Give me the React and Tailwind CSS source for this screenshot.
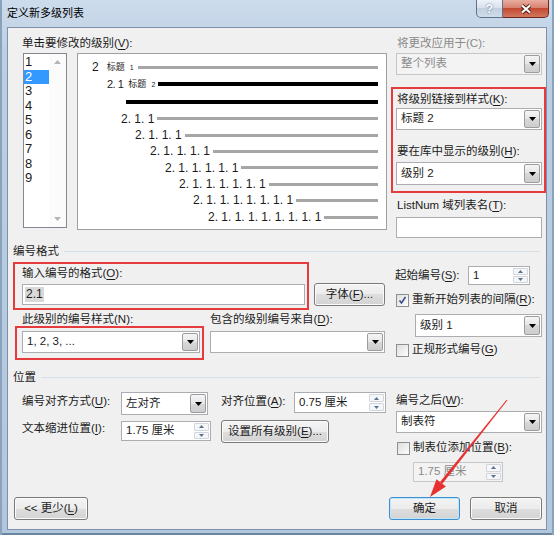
import React from 'react'

// Win7 style dialog: "定义新多级列表"

const U = ({ children }) => (
  <span className="underline decoration-1 underline-offset-[2px]">{children}</span>
)

function Caret() {
  return (
    <svg width="7" height="4" viewBox="0 0 7 4">
      <path d="M0 0h7L3.5 4z" fill="#000" />
    </svg>
  )
}

function Combo({ value, className = '', disabled = false }) {
  return (
    <div
      className={`flex border ${
        disabled
          ? 'border-[#c4c7cc] bg-[#f3f3f3] text-[#8a8a8a]'
          : 'border-[#abadb3] bg-white'
      } ${className}`}
    >
      <span className="flex flex-1 items-center pl-[4px] leading-none">{value}</span>
      <span className="my-[1px] mr-[1px] flex w-[16px] items-center justify-center rounded-[2px] border border-[#9c9c9c] bg-[linear-gradient(#f5f5f5,#e6e6e6_50%,#d8d8d8_50%,#cdcdcd)]">
        <Caret />
      </span>
    </div>
  )
}

function SpinArrow({ up }) {
  return (
    <svg width="5" height="3" viewBox="0 0 5 3">
      <path d={up ? 'M0 3h5L2.5 0z' : 'M0 0h5L2.5 3z'} fill="#59708f" />
    </svg>
  )
}

function Spinner({ value, className = '', disabled = false }) {
  return (
    <div
      className={`flex border ${
        disabled
          ? 'border-[#c4c7cc] bg-[#f3f3f3] text-[#8a8a8a]'
          : 'border-[#abadb3] bg-white'
      } ${className}`}
    >
      <span className="flex flex-1 items-center pl-[4px] leading-none">{value}</span>
      <span className="my-[1px] mr-[1px] flex w-[15px] flex-col gap-[1px]">
        <span className="flex flex-1 items-center justify-center rounded-[1px] border border-[#d2d6dc] bg-[#f4f6f8]">
          <SpinArrow up />
        </span>
        <span className="flex flex-1 items-center justify-center rounded-[1px] border border-[#d2d6dc] bg-[#f4f6f8]">
          <SpinArrow />
        </span>
      </span>
    </div>
  )
}

function Btn({ children, className = '', primary = false }) {
  return (
    <button
      className={`flex items-center justify-center rounded-[3px] border bg-[linear-gradient(#f4f4f4,#ececec_50%,#dedede_50%,#d3d3d3)] leading-none ${
        primary
          ? 'border-[#3d8fd1] shadow-[inset_0_0_0_1px_#bfe7fb]'
          : 'border-[#7a7a7a] shadow-[inset_0_0_0_1px_#fbfbfb]'
      } ${className}`}
    >
      {children}
    </button>
  )
}

function Check({ checked = false }) {
  return (
    <span className="flex h-[13px] w-[13px] shrink-0 items-center justify-center border border-[#8e8f8f] bg-[linear-gradient(135deg,#dedede,#fdfdfd)]">
      {checked ? (
        <svg width="9" height="9" viewBox="0 0 9 9">
          <path d="M1.5 4.5l2 2.5 4-6" fill="none" stroke="#3b4f8f" strokeWidth="1.6" />
        </svg>
      ) : null}
    </span>
  )
}

function GroupHeader({ title }) {
  return (
    <div className="flex h-[14px] shrink-0 items-center pl-[5px]">
      <span className="leading-[14px]">{title}</span>
      <span className="ml-[5px] mr-[6px] h-px flex-1 bg-[#d5dfe5]" />
    </div>
  )
}

// preview rows of the list levels
const levels = [
  { row: 'h-[16.5px] pl-[43px]', text: '2. 1. 1' },
  { row: 'h-[16px] pl-[57px]', text: '2. 1. 1. 1' },
  { row: 'h-[16.5px] pl-[72px]', text: '2. 1. 1. 1. 1' },
  { row: 'h-[16.5px] pl-[87px]', text: '2. 1. 1. 1. 1. 1' },
  { row: 'h-[16px] pl-[101px]', text: '2. 1. 1. 1. 1. 1. 1' },
  { row: 'h-[16.5px] pl-[115px]', text: '2. 1. 1. 1. 1. 1. 1. 1' },
  { row: 'h-[17px] pl-[130px]', text: '2. 1. 1. 1. 1. 1. 1. 1. 1' },
]

function Preview() {
  return (
    <div className="flex h-[177px] w-[310px] flex-col border border-[#a0a0a0] bg-white pr-[8px] pt-[4.5px]">
      <div className="flex h-[17px] items-center pl-[14px]">
        <span className="text-[12px]">2</span>
        <span className="ml-[8px] text-[9px] leading-none">标题</span>
        <span className="ml-[5px] text-[7px] leading-none">1</span>
        <span className="ml-[4px] h-[3px] flex-1 bg-[#a6a6a6]" />
      </div>
      <div className="flex h-[17.5px] items-center pl-[29px]">
        <span className="text-[11px] tracking-[-0.5px]">2. 1</span>
        <span className="ml-[5px] text-[9px] leading-none">标题</span>
        <span className="ml-[5px] text-[7px] leading-none">2</span>
        <span className="ml-[3px] h-[4px] flex-1 bg-black" />
      </div>
      <div className="flex h-[17.5px] items-center pl-[48px]">
        <span className="h-[4px] flex-1 bg-black" />
      </div>
      {levels.map((lv) => (
        <div key={lv.text} className={`flex items-center ${lv.row}`}>
          <span className="text-[12px] leading-none">{lv.text}</span>
          <span className="ml-[3px] h-[3px] flex-1 bg-[#a6a6a6]" />
        </div>
      ))}
    </div>
  )
}

function LevelList() {
  return (
    <div className="flex h-[175px] w-[44px] border border-[#828790] bg-white">
      <div className="flex flex-1 flex-col pt-[1px] text-[13px] leading-[14.5px]">
        {[1, 2, 3, 4, 5, 6, 7, 8, 9].map((n) => (
          <span
            key={n}
            className={`pl-[1px] ${n === 2 ? 'bg-[#3399ff] text-white' : ''}`}
          >
            {n}
          </span>
        ))}
      </div>
      <div className="flex w-[17px] flex-col items-center justify-between bg-[#fbfbfb] py-[6px]">
        <svg width="7" height="4" viewBox="0 0 7 4">
          <path d="M0 4h7L3.5 0z" fill="#b5b5b5" />
        </svg>
        <svg width="7" height="4" viewBox="0 0 7 4">
          <path d="M0 0h7L3.5 4z" fill="#b5b5b5" />
        </svg>
      </div>
    </div>
  )
}

export default function App() {
  return (
    <div className="relative flex h-[535px] w-[554px] flex-col overflow-hidden bg-[linear-gradient(180deg,#cddcec,#bccfe3_10%,#b2c7dd)] font-['Liberation_Sans','Noto_Sans_CJK_SC',sans-serif] text-[11.5px] text-[#1b1b1b] shadow-[inset_2px_0_0_#8aa3bd,inset_-2px_0_0_#8aa3bd,inset_0_-2px_0_#6d86a0]">
      {/* title bar */}
      <div className="flex h-[27px] shrink-0 justify-between">
        <span className="pl-[7px] pt-[5px] text-[11px] leading-[16px] text-black">定义新多级列表</span>
        <div className="mr-[5px] flex h-[18px]">
          <span className="flex w-[27px] items-center justify-center rounded-bl-[5px] border border-t-0 border-[#5f7390] bg-[linear-gradient(#eef3f9,#d8e2ee_45%,#c2d0e0_50%,#cfdcea)] text-[12px] font-bold text-white [text-shadow:0_0_2px_#4b5d78]">
            ?
          </span>
          <span className="flex w-[46px] items-center justify-center rounded-br-[5px] border border-l-0 border-t-0 border-[#6e2a20] bg-[linear-gradient(#e9ad9f,#d88370_45%,#c34a33_50%,#d3775f)]">
            <svg width="12" height="10" viewBox="0 0 12 10">
              <path d="M2 1.5l8 7M10 1.5l-8 7" stroke="#4a1a12" strokeWidth="4" />
              <path d="M2 1.5l8 7M10 1.5l-8 7" stroke="#fff" strokeWidth="2.2" />
            </svg>
          </span>
        </div>
      </div>

      {/* client area */}
      <div className="mx-[7px] flex h-[503px] flex-col border border-[#7d92aa] bg-[#f0f0f0]">
        {/* levels + preview + link options */}
        <div className="flex h-[216px] shrink-0">
          <div className="flex flex-col pl-[14px] pt-[8px]">
            <span className="leading-[14px]">
              单击要修改的级别(<U>V</U>):
            </span>
            <div className="mt-[3px] flex">
              <div className="ml-[1px]">
                <LevelList />
              </div>
              <div className="ml-[10px]">
                <Preview />
              </div>
            </div>
          </div>
          <div className="ml-[4px] flex w-[155px] flex-col pt-[8px]">
            <span className="pl-[6px] leading-[14px] text-[#8a8a8a]">将更改应用于(C):</span>
            <Combo value="整个列表" disabled className="ml-[5px] mt-[3px] h-[22px] w-[146px]" />
            <div className="mt-[12px] flex h-[106px] flex-col border-2 border-[#e63a3d] pl-[3px] pt-[3px]">
              <span className="pl-[1px] leading-[14px]">
                将级别链接到样式(<U>K</U>):
              </span>
              <Combo value="标题 2" className="mt-[2px] h-[22px] w-[146px]" />
              <span className="mt-[14px] pl-[1px] leading-[14px]">
                要在库中显示的级别(<U>H</U>):
              </span>
              <Combo value="级别 2" className="mt-[4px] h-[23px] w-[146px]" />
            </div>
            <span className="ml-[6px] mt-[5px] leading-[14px]">
              ListNum 域列表名(<U>T</U>):
            </span>
            <div className="ml-[5px] mt-[5px] h-[21px] w-[146px] border border-[#abadb3] bg-white" />
          </div>
        </div>

        <GroupHeader title="编号格式" />

        {/* number format */}
        <div className="flex h-[112px] shrink-0">
          <div className="flex w-[387px] flex-col pl-[5px] pt-[4px]">
            <div className="flex">
              <div className="flex h-[48px] w-[296px] flex-col border-2 border-[#e63a3d] pl-[7px] pt-[2px]">
                <span className="leading-[14px]">
                  输入编号的格式(<U>O</U>):
                </span>
                <div className="mt-[4px] flex h-[21px] w-[283px] items-center border border-[#abadb3] bg-white pl-[2px]">
                  <span className="bg-[#d9d9d9] px-[1px] text-[12px] leading-[15px]">2.1</span>
                </div>
              </div>
              <Btn className="ml-[5px] mt-[21px] h-[23px] w-[71px]">
                字体(<U>F</U>)...
              </Btn>
            </div>
            <div className="mt-[3px] flex h-[13px] leading-[13px]">
              <span className="w-[197px] pl-[9px]">此级别的编号样式(N):</span>
              <span>
                包含的级别编号来自(<U>D</U>):
              </span>
            </div>
            <div className="flex">
              <div className="ml-[2px] flex h-[34px] w-[189px] border-2 border-[#e63a3d] pl-[5px] pt-[3px]">
                <Combo value="1, 2, 3, ..." className="h-[22px] w-[178px]" />
              </div>
              <Combo value="" className="ml-[6px] mt-[5px] h-[22px] w-[175px]" />
            </div>
          </div>
          <div className="flex flex-col pt-[8px]">
            <div className="flex h-[19px] items-center">
              <span className="w-[73px]">
                起始编号(<U>S</U>):
              </span>
              <Spinner value="1" className="h-[19px] w-[62px]" />
            </div>
            <div className="ml-[1px] mt-[8px] flex h-[14px] items-center gap-[3px]">
              <Check checked />
              <span>
                重新开始列表的间隔(<U>R</U>):
              </span>
            </div>
            <Combo value="级别 1" className="ml-[20px] mt-[7px] h-[23px] w-[127px]" />
            <div className="ml-[1px] mt-[6px] flex h-[14px] items-center gap-[3px]">
              <Check />
              <span>
                正规形式编号(<U>G</U>)
              </span>
            </div>
          </div>
        </div>

        <GroupHeader title="位置" />

        {/* position */}
        <div className="flex h-[105px] shrink-0">
          <div className="flex w-[388px] flex-col pl-[14px] pt-[8px]">
            <div className="flex h-[23px]">
              <span className="w-[99px] pt-[2px] leading-[14px]">
                编号对齐方式(<U>U</U>):
              </span>
              <Combo value="左对齐" className="h-[23px] w-[87px]" />
              <span className="ml-[13px] w-[73px] pt-[2px] leading-[14px]">
                对齐位置(<U>A</U>):
              </span>
              <Spinner value="0.75 厘米" className="h-[21px] w-[92px]" />
            </div>
            <div className="mt-[5px] flex h-[23px]">
              <span className="w-[99px] pt-[1px] leading-[14px]">
                文本缩进位置(<U>I</U>):
              </span>
              <Spinner value="1.75 厘米" className="mt-[1px] h-[20px] w-[90px]" />
              <Btn className="ml-[10px] h-[23px] w-[108px]">
                设置所有级别(<U>E</U>)...
              </Btn>
            </div>
          </div>
          <div className="flex w-[146px] flex-col">
            <span className="mt-[9px] leading-[14px]">
              编号之后(<U>W</U>):
            </span>
            <Combo value="制表符" className="mt-[4px] h-[22px] w-[146px]" />
            <div className="ml-[1px] mt-[8px] flex h-[14px] items-center gap-[3px]">
              <Check />
              <span>
                制表位添加位置(<U>B</U>):
              </span>
            </div>
            <Spinner value="1.75 厘米" disabled className="ml-[17px] mt-[7px] h-[20px] w-[90px]" />
          </div>
        </div>

        {/* dialog buttons */}
        <div className="flex pt-[8px]">
          <Btn className="ml-[6px] h-[23px] w-[74px]">
            &lt;&lt; 更少(<U>L</U>)
          </Btn>
          <Btn primary className="ml-auto h-[23px] w-[71px]">
            确定
          </Btn>
          <Btn className="ml-[10px] mr-[4px] h-[23px] w-[72px]">取消</Btn>
        </div>
      </div>

      {/* red pointer arrow */}
      <svg className="pointer-events-none absolute left-0 top-0" width="554" height="535">
        <polygon points="507.4,400.3 506.6,399.7 440,482 442.4,483.8" fill="#e8312f" />
        <polygon points="430,497 445.9,486.6 436.5,479.2" fill="#e8312f" />
      </svg>
    </div>
  )
}
